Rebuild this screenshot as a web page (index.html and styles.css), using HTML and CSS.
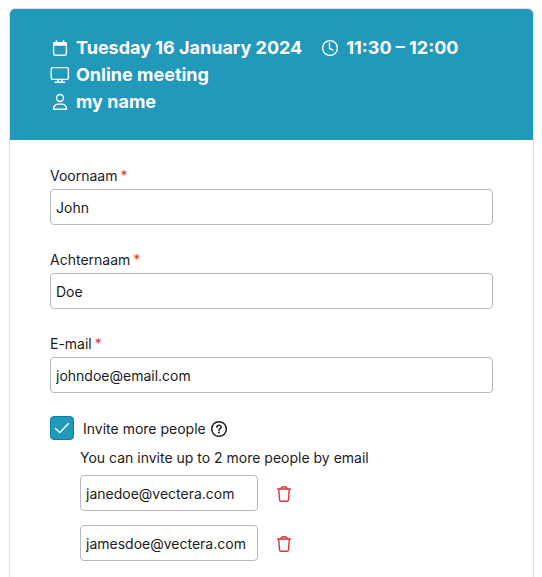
FILE: index.html
```
<!DOCTYPE html>
<html lang="en">
<head>
  <meta charset="UTF-8">
  <meta name="viewport" content="width=device-width, initial-scale=1.0">
  <title>Book a meeting</title>
  <link rel="stylesheet" href="styles.css">
</head>
<body>

  <main class="card">
    <header class="summary">
      <div class="summary-row">
        <span class="summary-item">
          <svg class="icon" viewBox="0 0 20 20">
            <rect x="3.6" y="4.6" width="12.8" height="12.6" rx="1.6"/>
            <path class="solid" d="M3 7.7V5.6Q3 4 4.8 4H5.7V2.2H7.2V4H12.8V2.2H14.3V4H15.2Q17 4 17 5.6V7.7Z"/>
          </svg>
          Tuesday 16 January 2024
        </span>
        <span class="summary-item">
          <svg class="icon" viewBox="0 0 20 20">
            <circle cx="10" cy="10" r="7.4"/>
            <path d="M9.5 5.2V10.4L12.8 12.2"/>
          </svg>
          11:30 – 12:00
        </span>
      </div>
      <div class="summary-row">
        <span class="summary-item">
          <svg class="icon" viewBox="0 0 20 20">
            <rect x="1.2" y="2.6" width="17.2" height="11.8" rx="1.6"/>
            <path d="M8.2 14.5L7.8 17M11.6 14.5L12 17M5.2 17.2H14.6"/>
          </svg>
          Online meeting
        </span>
      </div>
      <div class="summary-row">
        <span class="summary-item">
          <svg class="icon" viewBox="0 0 20 20">
            <circle cx="10" cy="6" r="3.5"/>
            <path d="M3.5 17.2C3.5 13.8 6 12.1 8.4 12.1H11.6C14 12.1 16.5 13.8 16.5 17.2Z"/>
          </svg>
          my name
        </span>
      </div>
    </header>

    <form class="form">
      <div class="field">
        <label for="firstName">Voornaam<span class="required">*</span></label>
        <input class="text-input" type="text" id="firstName" value="John">
      </div>
      <div class="field">
        <label for="lastName">Achternaam<span class="required">*</span></label>
        <input class="text-input" type="text" id="lastName" value="Doe">
      </div>
      <div class="field">
        <label for="email">E-mail<span class="required">*</span></label>
        <input class="text-input" type="email" id="email" value="johndoe@email.com">
      </div>

      <div class="invite">
        <span class="check">
          <input type="checkbox" id="invite" checked>
          <svg class="check-mark" viewBox="0 0 24 24"><path d="M5.5 12.4L9.8 16.5L18.5 7.6"/></svg>
        </span>
        <label for="invite">Invite more people</label>
        <svg class="help" viewBox="0 0 18 18" role="img" aria-label="Help">
          <circle cx="9" cy="9" r="7.3"/>
          <path d="M6.9 7.3C6.9 4.6 11.2 4.7 11.2 7.1C11.2 8.7 9 8.7 9 10.4"/>
          <circle class="dot" cx="9" cy="12.6" r="1"/>
        </svg>
      </div>

      <div class="guests">
        <p>You can invite up to 2 more people by email</p>
        <div class="guest">
          <input class="text-input" type="email" aria-label="Guest 1" value="janedoe@vectera.com">
          <button class="remove" type="button" aria-label="Remove guest 1">
            <svg viewBox="0 0 16 18"><path d="M1.6 4H14.4M5 3.8C5 1 11 1 11 3.8M2.7 4.2L3.6 15Q3.7 16.3 5 16.3H11Q12.3 16.3 12.4 15L13.3 4.2"/></svg>
          </button>
        </div>
        <div class="guest">
          <input class="text-input" type="email" aria-label="Guest 2" value="jamesdoe@vectera.com">
          <button class="remove" type="button" aria-label="Remove guest 2">
            <svg viewBox="0 0 16 18"><path d="M1.6 4H14.4M5 3.8C5 1 11 1 11 3.8M2.7 4.2L3.6 15Q3.7 16.3 5 16.3H11Q12.3 16.3 12.4 15L13.3 4.2"/></svg>
          </button>
        </div>
      </div>
    </form>
  </main>

</body>
</html>
```
FILE: styles.css
```
* {
  margin: 0;
  padding: 0;
  box-sizing: border-box;
}

body {
  padding: 8px 8px 0 9px;
  background: #fff;
  font-family: Inter, "Liberation Sans", sans-serif;
  font-size: 14px;
  line-height: 20px;
  color: #1b1c20;
}

svg {
  display: block;
  fill: none;
  stroke: currentColor;
  stroke-width: 1.4;
  stroke-linecap: round;
  stroke-linejoin: round;
}

.card {
  border: 1px solid #dfdfe1;
  border-bottom: none;
  border-radius: 6px 6px 0 0;
  overflow: hidden;
}

/* Meeting summary */
.summary {
  padding: 25px 40px;
  background: #2299ba;
  color: #fff;
  font-size: 18px;
  font-weight: 700;
  line-height: 27px;
}

.summary-row {
  display: flex;
  gap: 18px;
}

.summary-item {
  display: flex;
  align-items: center;
  gap: 6px;
}

.icon {
  width: 20px;
  height: 20px;
}

.solid {
  fill: currentColor;
  stroke: none;
}

/* Form */
.form {
  padding: 26px 40px 16px;
}

.field {
  margin-bottom: 25px;
}

.field label {
  display: block;
  margin-bottom: 3px;
}

.required {
  margin-left: 3px;
  color: #e03c12;
}

.text-input {
  display: block;
  width: 100%;
  height: 36px;
  padding: 0 5px;
  border: 1px solid #b9b9bb;
  border-radius: 4px;
  background: #fff;
  color: inherit;
  font: inherit;
}

.invite {
  display: flex;
  align-items: center;
  margin-top: -2px;
}

.invite label {
  margin: 2px 4px 0 9px;
}

.check {
  display: grid;
}

.check input,
.check-mark {
  grid-area: 1 / 1;
  width: 24px;
  height: 24px;
}

.check input {
  appearance: none;
  border: 1px solid #087f9f;
  border-radius: 4px;
  background: #fff;
}

.check input:checked {
  background: #2299ba;
}

.check-mark {
  color: #fff;
  pointer-events: none;
}

.help {
  width: 18px;
  height: 18px;
  margin-top: 2px;
  stroke-width: 1.5;
}

.dot {
  fill: currentColor;
  stroke: none;
}

.guests {
  padding: 8px 0 0 30px;
}

.guests p {
  margin-bottom: 7px;
}

.guest {
  display: flex;
  align-items: center;
  gap: 18px;
}

.guest + .guest {
  margin-top: 14px;
}

.guest .text-input {
  width: 178px;
}

.remove {
  padding-top: 2px;
  border: none;
  background: none;
  color: #dc2f3f;
  cursor: pointer;
}

.remove svg {
  width: 16px;
  height: 18px;
}
```
